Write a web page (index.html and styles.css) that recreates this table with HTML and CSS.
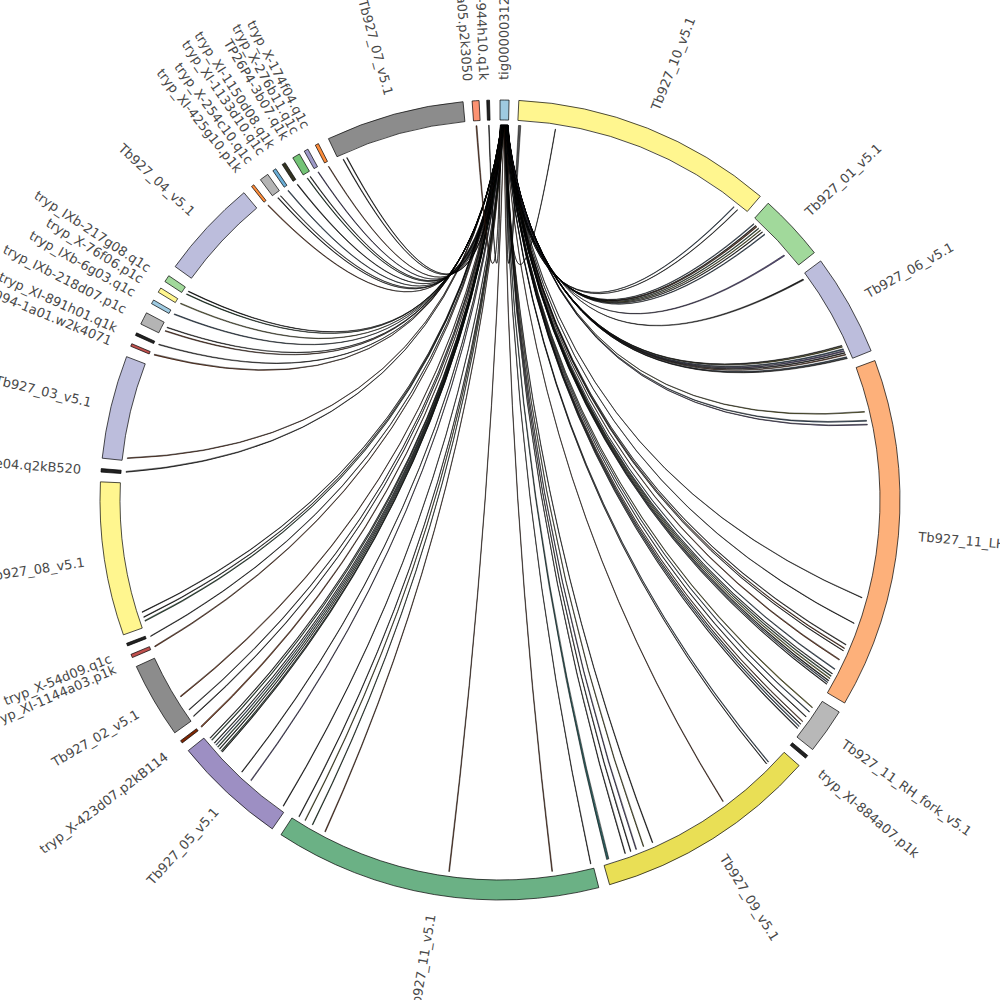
FILE: index.html
```html
<!DOCTYPE html>
<html lang="en">
<head>
<meta charset="utf-8">
<title>Circos plot</title>
<link rel="stylesheet" href="styles.css">
</head>
<body>
<svg id="circos" class="chart" width="1000" height="1000" viewBox="0 0 1000 1000" xmlns="http://www.w3.org/2000/svg">
  <g id="links"></g>
  <g id="segs"></g>
  <g class="labels">
    <text class="lbl" transform="rotate(-89.5 500 500)" x="920" y="500" dy="0.35em">tig00000312</text>
    <text class="lbl" transform="rotate(-68.35 500 500)" x="920" y="500" dy="0.35em">Tb927_10_v5.1</text>
    <text class="lbl" transform="rotate(-43 500 500)" x="920" y="500" dy="0.35em">Tb927_01_v5.1</text>
    <text class="lbl" transform="rotate(-29.3 500 500)" x="920" y="500" dy="0.35em">Tb927_06_v5.1</text>
    <text class="lbl" transform="rotate(5 500 500)" x="920" y="500" dy="0.35em">Tb927_11_LH_fork_v5.1</text>
    <text class="lbl" transform="rotate(35.3 500 500)" x="920" y="500" dy="0.35em">Tb927_11_RH_fork_v5.1</text>
    <text class="lbl" transform="rotate(40.4 500 500)" x="920" y="500" dy="0.35em">tryp_XI-884a07.p1k</text>
    <text class="lbl" transform="rotate(57.9 500 500)" x="920" y="500" dy="0.35em">Tb927_09_v5.1</text>

    <text class="lbl lbl-l" transform="rotate(279.45 500 500)" x="80" y="500" dy="0.35em">Tb927_11_v5.1</text>
    <text class="lbl lbl-l" transform="rotate(312.5 500 500)" x="80" y="500" dy="0.35em">Tb927_05_v5.1</text>
    <text class="lbl lbl-l" transform="rotate(322.6 500 500)" x="80" y="500" dy="0.35em">tryp_X-423d07.p2kB114</text>
    <text class="lbl lbl-l" transform="rotate(329.5 500 500)" x="80" y="500" dy="0.35em">Tb927_02_v5.1</text>
    <text class="lbl lbl-l" transform="rotate(336.3 500 500)" x="80" y="500" dy="0.35em">tryp_XI-1144a03.p1k</text>
    <text class="lbl lbl-l" transform="rotate(337.9 500 500)" x="80" y="500" dy="0.35em">tryp_X-54d09.q1c</text>
    <text class="lbl lbl-l" transform="rotate(351.5 500 500)" x="80" y="500" dy="0.35em">Tb927_08_v5.1</text>
    <text class="lbl lbl-l" transform="rotate(364.2 500 500)" x="80" y="500" dy="0.35em">e04.q2kB520</text>
    <text class="lbl lbl-l" transform="rotate(373.4 500 500)" x="80" y="500" dy="0.35em">Tb927_03_v5.1</text>
    <text class="lbl lbl-l" transform="rotate(382.2 500 500)" x="80" y="500" dy="0.35em">4094-1a01.w2k4071</text>
    <text class="lbl lbl-l" transform="rotate(384.1 500 500)" x="80" y="500" dy="0.35em">tryp_XI-891h01.q1k</text>
    <text class="lbl lbl-l" transform="rotate(386.9 500 500)" x="80" y="500" dy="0.35em">tryp_IXb-218d07.p1c</text>
    <text class="lbl lbl-l" transform="rotate(389.5 500 500)" x="80" y="500" dy="0.35em">tryp_IXb-6g03.q1c</text>
    <text class="lbl lbl-l" transform="rotate(391.6 500 500)" x="80" y="500" dy="0.35em">tryp_X-76f06.p1c</text>
    <text class="lbl lbl-l" transform="rotate(393.4 500 500)" x="80" y="500" dy="0.35em">tryp_IXb-217g08.q1c</text>
    <text class="lbl lbl-l" transform="rotate(403 500 500)" x="80" y="500" dy="0.35em">Tb927_04_v5.1</text>
    <text class="lbl lbl-l" transform="rotate(411.6 500 500)" x="80" y="500" dy="0.35em">tryp_XI-425g10.p1k</text>
    <text class="lbl lbl-l" transform="rotate(413.5 500 500)" x="80" y="500" dy="0.35em">tryp_X-254c10.q1c</text>
    <text class="lbl lbl-l" transform="rotate(415.5 500 500)" x="80" y="500" dy="0.35em">tryp_XI-1133d10.q1c</text>
    <text class="lbl lbl-l" transform="rotate(417.1 500 500)" x="80" y="500" dy="0.35em">tryp_XI-1150d08.q1k</text>
    <text class="lbl lbl-l" transform="rotate(419.3 500 500)" x="80" y="500" dy="0.35em">TP26P4-3b07.q1k</text>
    <text class="lbl lbl-l" transform="rotate(420.9 500 500)" x="80" y="500" dy="0.35em">tryp_X-276b11.q1c</text>
    <text class="lbl lbl-l" transform="rotate(422.5 500 500)" x="80" y="500" dy="0.35em">tryp_X-174f04.q1c</text>
    <text class="lbl lbl-l" transform="rotate(434.65 500 500)" x="80" y="500" dy="0.35em">Tb927_07_v5.1</text>
    <text class="lbl lbl-l" transform="rotate(445.6 500 500)" x="80" y="500" dy="0.35em">a05.p2k3050</text>
    <text class="lbl lbl-l" transform="rotate(447.8 500 500)" x="80" y="500" dy="0.35em">tryp_XI-944h10.q1k</text>
  </g>
</svg>
<script src="chart.js"></script>
</body>
</html>
```

FILE: styles.css
```css
html, body {
  margin: 0;
  padding: 0;
  background: #ffffff;
}

.chart {
  display: block;
  width: 1000px;
  height: 1000px;
}

.seg {
  stroke: #000000;
  stroke-width: 0.7;
  stroke-linejoin: miter;
}

.link {
  stroke: #000000;
  stroke-width: 0.5;
  stroke-linejoin: round;
}

.lbl {
  font-family: "DejaVu Sans", "Liberation Sans", sans-serif;
  font-size: 13px;
  fill: #484848;
}

.lbl-l {
  text-anchor: end;
}
```

FILE: chart.js
```js
(function () {
  var NS = "http://www.w3.org/2000/svg";
  var gSeg = document.getElementById("segs");
  var gLink = document.getElementById("links");
  var CX = 500, CY = 500, R0 = 380, R1 = 400, RL = 375;

  function pt(r, a) {
    var t = a * Math.PI / 180;
    return [CX + r * Math.sin(t), CY - r * Math.cos(t)];
  }
  function f(p) { return p[0].toFixed(2) + " " + p[1].toFixed(2); }

  var segs = [
    [0.0, 1.3, "#9ecae1"],
    [2.7, 40.6, "#fff68f"],
    [42.1, 51.8, "#a1d99b"],
    [53.3, 68.1, "#bcbddc"],
    [69.6, 120.5, "#fdb07a"],
    [122.0, 128.6, "#b8b8b8"],
    [129.7, 130.2, "#222222"],
    [131.6, 164.1, "#e9df55"],
    [165.7, 213.2, "#6bb185"],
    [214.7, 231.2, "#9d8fc3"],
    [232.6, 233.0, "#7f2704"],
    [234.4, 245.4, "#8c8c8c"],
    [246.8, 247.3, "#c0504d"],
    [248.6, 249.0, "#222222"],
    [250.3, 272.6, "#fff68f"],
    [274.0, 274.5, "#222222"],
    [276.0, 291.0, "#bcbddc"],
    [292.6, 293.0, "#c0504d"],
    [294.3, 294.7, "#222222"],
    [296.1, 297.9, "#b4b4b4"],
    [299.4, 300.0, "#9ecae1"],
    [301.3, 302.0, "#fff68f"],
    [303.1, 304.1, "#a1d99b"],
    [305.7, 320.2, "#bcbddc"],
    [321.6, 322.0, "#fd8d3c"],
    [323.2, 324.5, "#b4b4b4"],
    [325.4, 325.9, "#6baed6"],
    [327.0, 327.5, "#333322"],
    [328.8, 329.9, "#74c476"],
    [330.7, 331.3, "#9e9ac8"],
    [332.5, 333.0, "#fd8d3c"],
    [334.6, 354.7, "#8c8c8c"],
    [356.0, 357.0, "#fc9272"],
    [358.1, 358.5, "#222222"]
  ];

  var B = "#8b4a2b", G = "#2e5e3e", S = "#4a6a8a", O = "#8a8a30", P = "#6a5a9a", K = "#222222";
  var links = [
    [3.0, "#555555", 0.35], [8.5, K, 0.06],
    [38.6, S, 0.1], [39.3, K, 0.08],
    [42.6, S, 0.12], [43.0, K, 0.1], [43.2, B, 0.12], [43.6, G, 0.12], [44.0, O, 0.1], [44.4, K, 0.1], [44.9, S, 0.12], [49.3, P, 0.18],
    [54.0, K, 0.2],
    [65.7, K, 0.1], [65.9, O, 0.1], [66.3, S, 0.15], [66.6, P, 0.15], [66.9, K, 0.12], [67.2, B, 0.12], [67.6, S, 0.12], [67.8, K, 0.1],
    [76.4, O, 0.12], [77.8, S, 0.15], [78.4, P, 0.12],
    [105.1, K, 0.08], [109.2, K, 0.08], [112.7, K, 0.1], [113.3, B, 0.1], [113.7, K, 0.08], [115.2, B, 0.15],
    [116.8, S, 0.12], [117.6, K, 0.1], [118.0, G, 0.12], [118.4, O, 0.12], [118.8, K, 0.12], [119.1, S, 0.1], [119.4, K, 0.1],
    [123.6, O, 0.12], [124.4, S, 0.1], [125.3, K, 0.1], [126.2, B, 0.1], [126.7, K, 0.1], [127.1, S, 0.12], [127.5, K, 0.12],
    [134.3, S, 0.1], [134.7, K, 0.08], [143.5, B, 0.1],
    [156.0, K, 0.1], [157.5, O, 0.1], [158.7, P, 0.12], [159.6, K, 0.1], [160.5, K, 0.1], [163.3, "#2e5e5e", 0.35],
    [166.0, K, 0.08], [172.0, B, 0.12], [187.8, B, 0.12],
    [207.8, B, 0.12], [210.0, G, 0.1], [211.3, O, 0.1], [212.4, K, 0.1],
    [215.3, K, 0.1], [221.6, P, 0.12], [223.5, K, 0.1],
    [227.8, K, 0.1], [228.0, G, 0.1], [228.4, K, 0.1], [228.8, G, 0.12], [229.2, S, 0.1], [229.6, K, 0.1], [230.2, G, 0.12], [230.6, K, 0.1],
    [232.8, B, 0.2],
    [234.8, K, 0.1], [236.0, K, 0.1], [238.4, B, 0.15],
    [247.0, B, 0.15], [248.7, K, 0.1],
    [251.2, G, 0.15], [251.8, K, 0.1], [252.6, K, 0.1],
    [274.3, K, 0.15], [276.4, B, 0.12],
    [292.8, B, 0.15], [294.5, K, 0.12],
    [296.8, B, 0.12], [297.4, K, 0.1],
    [299.7, S, 0.12], [301.6, O, 0.12], [303.3, G, 0.1], [303.8, K, 0.1],
    [321.8, B, 0.12], [323.7, K, 0.1], [324.2, "#555555", 0.1], [325.6, S, 0.12], [327.3, K, 0.12],
    [329.1, G, 0.1], [329.6, K, 0.1], [331.0, P, 0.1], [332.8, B, 0.1],
    [335.3, K, 0.1], [335.9, K, 0.1],
    [356.4, B, 0.15], [358.3, K, 0.1]
  ];

  function ctrl(a, b) {
    var d = ((b - a) % 360 + 360) % 360;
    var delta = d > 180 ? 360 - d : d;
    var mid = d > 180 ? a - delta / 2 : a + delta / 2;
    var k = 0.263 * RL * Math.cos(delta / 2 * Math.PI / 180);
    return pt(k, mid);
  }

  links.sort(function (x, y) { return x[0] - y[0]; });
  var n = links.length;
  links.forEach(function (l, i) {
    var s = 1.22 - 1.14 * i / (n - 1);
    var t = l[0], w = l[2], sw = 0.05;
    var c = ctrl(s, t);
    var A1 = pt(RL, s - sw / 2), A2 = pt(RL, s + sw / 2);
    var B1 = pt(RL, t - w / 2), B2 = pt(RL, t + w / 2);
    var d = "M" + f(A1) + " Q" + f(c) + " " + f(B2) + " L" + f(B1) + " Q" + f(c) + " " + f(A2) + " Z";
    var p = document.createElementNS(NS, "path");
    p.setAttribute("d", d);
    p.setAttribute("fill", l[1]);
    p.setAttribute("class", "link");
    gLink.appendChild(p);
  });

  segs.forEach(function (sg) {
    var a = sg[0], b = sg[1], large = (b - a) > 180 ? 1 : 0;
    var d = "M" + f(pt(R1, a)) + " A" + R1 + " " + R1 + " 0 " + large + " 1 " + f(pt(R1, b)) +
      " L" + f(pt(R0, b)) + " A" + R0 + " " + R0 + " 0 " + large + " 0 " + f(pt(R0, a)) + " Z";
    var p = document.createElementNS(NS, "path");
    p.setAttribute("d", d);
    p.setAttribute("fill", sg[2]);
    p.setAttribute("class", "seg");
    gSeg.appendChild(p);
  });
})();
```
